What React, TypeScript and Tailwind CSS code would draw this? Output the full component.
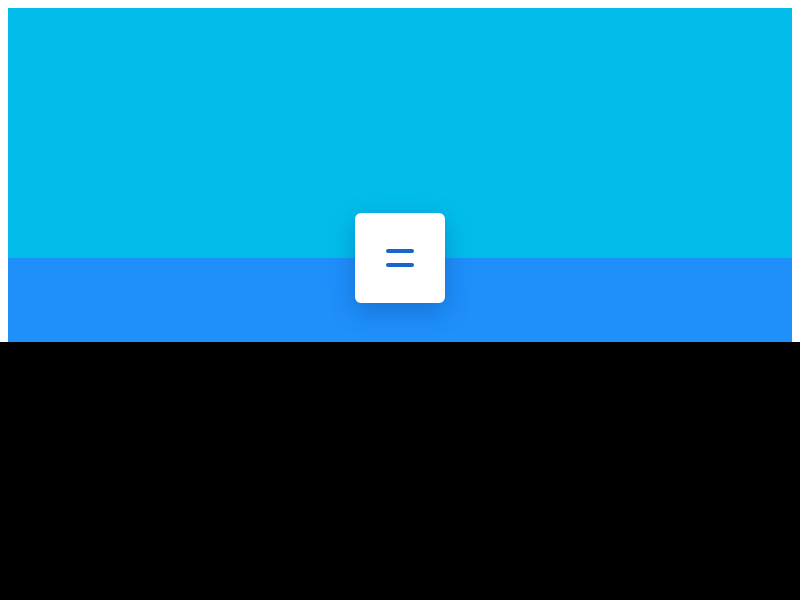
export default function App() {
  return (
    <div className="flex min-h-[600px] flex-col bg-black">
      <div className="bg-white px-2 pt-2">
        <div className="relative">
          <div className="h-[250px] bg-[#02bdea]" />
          <div className="h-[84px] bg-[#1f8ffa]" />
          <button
            className="absolute left-1/2 top-[250px] flex h-[90px] w-[90px] -translate-x-1/2 -translate-y-1/2 flex-col items-center justify-center gap-[10px] rounded-md bg-white shadow-[0_8px_24px_rgba(10,60,140,0.35)]"
            aria-label="Menu"
          >
            <span className="block h-[4px] w-[28px] rounded-full bg-[#1667cc]" />
            <span className="block h-[4px] w-[28px] rounded-full bg-[#1667cc]" />
          </button>
        </div>
      </div>
    </div>
  );
}
